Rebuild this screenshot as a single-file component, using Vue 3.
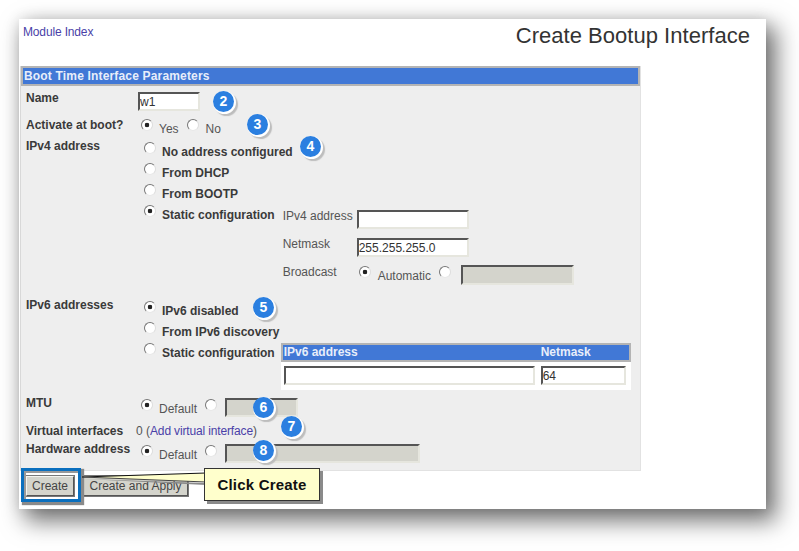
<template>
  <div class="page">
    <div class="card">
      <header class="top">
        <a class="link">Module Index</a>
        <h1 class="title">Create Bootup Interface</h1>
      </header>

      <section class="panel">
        <div class="bar">Boot Time Interface Parameters</div>
        <div class="body">
          <div class="row r-name">
            <label class="lab">Name</label>
            <input class="field name" value="w1" />
          </div>
          <div class="row r-act">
            <label class="lab">Activate at boot?</label>
            <div class="inline ml5">
              <input class="radio" type="radio" name="act" checked />
              <span class="txt t1">Yes</span>
              <input class="radio" type="radio" name="act" />
              <span class="txt t3">No</span>
            </div>
          </div>
          <div class="row r-v4">
            <label class="lab">IPv4 address</label>
            <div class="opts">
              <div class="opt"><input class="radio" type="radio" name="v4" /><b>No address configured</b></div>
              <div class="opt"><input class="radio" type="radio" name="v4" /><b>From DHCP</b></div>
              <div class="opt"><input class="radio" type="radio" name="v4" /><b>From BOOTP</b></div>
              <div class="opt static">
                <input class="radio" type="radio" name="v4" checked /><b>Static configuration</b>
                <div class="sub">
                  <div class="subrow"><span class="sublab">IPv4 address</span><input class="field mid" /></div>
                  <div class="subrow"><span class="sublab">Netmask</span><input class="field mid" value="255.255.255.0" /></div>
                  <div class="subrow broad">
                    <span class="sublab">Broadcast</span>
                    <input class="radio" type="radio" name="bc" checked />
                    <span class="txt t2">Automatic</span>
                    <input class="radio" type="radio" name="bc" />
                    <input class="field off bcf" disabled />
                  </div>
                </div>
              </div>
            </div>
          </div>
          <div class="row r-v6">
            <label class="lab">IPv6 addresses</label>
            <div class="opts">
              <div class="opt"><input class="radio" type="radio" name="v6" checked /><b>IPv6 disabled</b></div>
              <div class="opt"><input class="radio" type="radio" name="v6" /><b>From IPv6 discovery</b></div>
              <div class="opt static">
                <input class="radio" type="radio" name="v6" /><b>Static configuration</b>
                <div class="v6table">
                  <div class="v6head"><span class="v6a">IPv6 address</span><span>Netmask</span></div>
                  <div class="v6body">
                    <input class="field v6in" />
                    <input class="field v6mask" value="64" />
                  </div>
                </div>
              </div>
            </div>
          </div>
          <div class="row r-mtu">
            <label class="lab">MTU</label>
            <div class="inline ml5">
              <input class="radio" type="radio" name="mtu" checked />
              <span class="txt t1">Default</span>
              <input class="radio" type="radio" name="mtu" />
              <input class="field off mtu" disabled />
            </div>
          </div>
          <div class="row r-virt">
            <label class="lab">Virtual interfaces</label>
            <span class="virt">0 (<a class="link">Add virtual interface</a>)</span>
          </div>
          <div class="row r-hw">
            <label class="lab">Hardware address</label>
            <div class="inline ml5">
              <input class="radio" type="radio" name="hw" checked />
              <span class="txt t1">Default</span>
              <input class="radio" type="radio" name="hw" />
              <input class="field off hw" disabled />
            </div>
          </div>
        </div>
      </section>

      <div class="actions">
        <button class="btn create">Create</button>
        <button class="btn apply">Create and Apply</button>
      </div>

      <span v-for="b in badges" :key="b.n" class="badge" :style="{ left: b.x + 'px', top: b.y + 'px' }">{{ b.n }}</span>

      <div class="hilite"></div>
      <svg class="pointer" width="140" height="30" viewBox="0 0 140 30">
        <polygon points="3,11 124,15 124,17" fill="#8a8a8a" />
        <polygon points="0,9 124,5 124,14" fill="#ffffcc" />
        <polyline points="0,9 124,5" fill="none" stroke="#111" stroke-width="1" />
        <polyline points="0,9 124,14" fill="none" stroke="#444" stroke-width="1" />
      </svg>
      <div class="callout">Click Create</div>
    </div>
  </div>
</template>

<script setup>
const badges = [
  { n: 2, x: 194, y: 72 },
  { n: 3, x: 228, y: 95 },
  { n: 4, x: 281, y: 117 },
  { n: 5, x: 234, y: 278 },
  { n: 6, x: 234, y: 378 },
  { n: 7, x: 262, y: 397 },
  { n: 8, x: 234, y: 421 }
]
</script>

<style>
html, body { margin: 0; background: #fff; }
</style>

<style scoped>
.page {
  width: 799px;
  height: 551px;
  box-sizing: border-box;
  padding: 19px 33px 42px 19px;
  overflow: hidden;
  background: #fff;
  font-family: "Liberation Sans", Arial, sans-serif;
  font-size: 12px;
  color: #444;
}
.card {
  position: relative;
  height: 490px;
  background: #fff;
  box-shadow: 0 0 14px rgba(0, 0, 0, 0.1), 8px 10px 22px 2px rgba(0, 0, 0, 0.55);
}
.top {
  height: 47px;
  display: flex;
  justify-content: space-between;
  padding-right: 16px;
}
.link { color: #4a3fa8; letter-spacing: -0.15px; }
.top .link { margin: 7px 0 0 4px; line-height: 13px; }
.title {
  margin: 3px 0 0;
  font-weight: 400;
  font-size: 22px;
  line-height: 28px;
  letter-spacing: 0.03px;
  color: #333;
}
.panel {
  margin-left: 1px;
  width: 621px;
  height: 405px;
  box-sizing: border-box;
  background: #eeeeee;
  border-right: 1px solid #e2e2e2;
  border-bottom: 1px solid #e2e2e2;
  border-left: 1px solid #d8d8d8;
}
.bar {
  height: 16px;
  line-height: 16px;
  border: 2px solid #b4b4b4;
  background: #4178d6;
  color: #e8eefa;
  font-weight: 700;
  font-size: 12px;
  letter-spacing: 0.17px;
  padding-left: 1px;
}
.row {
  display: grid;
  grid-template-columns: 110px 1fr;
  padding-left: 5px;
  align-items: start;
}
.lab {
  font-weight: 700;
  line-height: 16px;
  color: #3a3a3a;
  white-space: nowrap;
}
b { color: #3a3a3a; }
.r-name { height: 30px; }
.r-name .lab { padding-top: 4px; }
.r-act { height: 20px; }
.r-act .lab { padding-top: 1px; }
.r-v4 { height: 160px; }
.r-v4 .lab { padding-top: 2px; }
.r-v4 .opts { padding-top: 5px; }
.r-v6 { height: 96px; }
.r-v6 .lab { padding-top: 1px; }
.r-v6 .opts { padding-top: 4px; }
.r-mtu { height: 30px; }
.r-mtu .lab { padding-top: 3px; }
.r-virt { height: 18px; }
.r-virt .lab { padding-top: 1px; }
.r-hw .lab { padding-top: 1px; }

.inline { display: flex; align-items: flex-start; }
.ml5 { margin-left: 5px; }
.radio {
  appearance: none;
  -webkit-appearance: none;
  width: 12px;
  height: 12px;
  box-sizing: border-box;
  margin: 0;
  flex: none;
  border-radius: 50%;
  border: 1px solid;
  border-color: #777 #ddd #e8e8e8 #777;
  background: #fff;
}
.radio:checked {
  background: radial-gradient(circle, #222 0 2px, #fff 2.6px);
}
.txt { line-height: 16px; color: #555; }
.r-act .inline { padding-top: 3px; }
.r-mtu .inline { padding-top: 7px; }
.r-hw .inline { padding-top: 5px; }
.t1 { margin: 2px 8px 0 6px; }
.t3 { margin: 2px 0 0 7px; }
.opts { margin-left: 8px; }
.opt {
  display: flex;
  height: 21px;
  align-items: flex-start;
  white-space: nowrap;
}
.opt .radio { margin-top: 1px; margin-right: 6px; }
.opt b { line-height: 21px; margin-top: 1px; }
.sub {
  margin: 4px 0 0 8px;
  width: 300px;
}
.subrow {
  display: flex;
  align-items: flex-start;
  height: 28px;
}
.sublab {
  width: 74px;
  flex: none;
  line-height: 16px;
  color: #555;
}
.subrow .field { margin-top: 2px; }
.broad .sublab { width: 76px; }
.broad .radio { margin: 2px 0 0 0; }
.broad .t2 { margin: 4px 8px 0 7px; }
.broad .bcf { margin: 1px 0 0 10px; }
.field {
  box-sizing: border-box;
  height: 19px;
  padding: 0;
  border: 2px solid;
  border-color: #555 #e6e6de #e6e6de #555;
  background: #fff;
  font: 12px "Liberation Sans", Arial, sans-serif;
  color: #333;
  outline: none;
}
.name { width: 62px; margin: 6px 0 0 2px; }
.mid { width: 112px; }
.off { background: #d4d4cc; }
.bcf { width: 113px; height: 20px; }
.mtu { width: 73px; margin: -1px 0 0 8px; }
.hw { width: 195px; margin: -1px 0 0 8px; }
.v6table {
  margin: 1px 0 0 6px;
  width: 350px;
  height: 47px;
  background: #fff;
  flex: none;
}
.v6head {
  height: 15px;
  line-height: 15px;
  border: 2px solid #b4b4b4;
  background: #4178d6;
  color: #e8eefa;
  font-weight: 700;
  display: flex;
}
.v6a { width: 257px; padding-left: 1px; }
.v6body { display: flex; padding: 4px 0 0 3px; }
.v6in { width: 251px; }
.v6mask { width: 85px; margin-left: 6px; }
.virt { line-height: 16px; padding-top: 1px; color: #555; }

.actions {
  display: flex;
  gap: 9px;
  padding: 5px 0 0 7px;
}
.btn {
  height: 20px;
  box-sizing: border-box;
  padding: 0;
  border: 1px solid;
  border-color: #f4f4f0 #555 #555 #f4f4f0;
  outline: 1px solid #777;
  background: #d4d4cc;
  font: 12px "Liberation Sans", Arial, sans-serif;
  color: #444;
}
.create { width: 48px; }
.apply { width: 105px; }

.badge {
  position: absolute;
  width: 21px;
  height: 21px;
  border-radius: 50%;
  background: #2b7fe0;
  color: #fff;
  font: 700 14px/21px "Liberation Sans", Arial, sans-serif;
  text-align: center;
  box-shadow: 1px 1px 0 1px #fff, 3px 3px 1px 1px #bdbdbd;
}
.hilite {
  position: absolute;
  left: 2px;
  top: 449px;
  width: 54px;
  height: 28px;
  border: 3px solid #0a6fbe;
  box-shadow: 2px 2px 1px 1px #8a8a8a, inset 2px 2px 0 #999;
}
.pointer {
  position: absolute;
  left: 63px;
  top: 449px;
}
.callout {
  position: absolute;
  left: 185px;
  top: 449px;
  width: 116px;
  height: 33px;
  box-sizing: border-box;
  border: 1px solid #333;
  background: #ffffcc;
  box-shadow: 3px 3px 0 #8a8a8a;
  color: #111;
  font: 700 15px/32px "Liberation Sans", Arial, sans-serif;
  letter-spacing: 0.2px;
  text-align: center;
}
</style>
